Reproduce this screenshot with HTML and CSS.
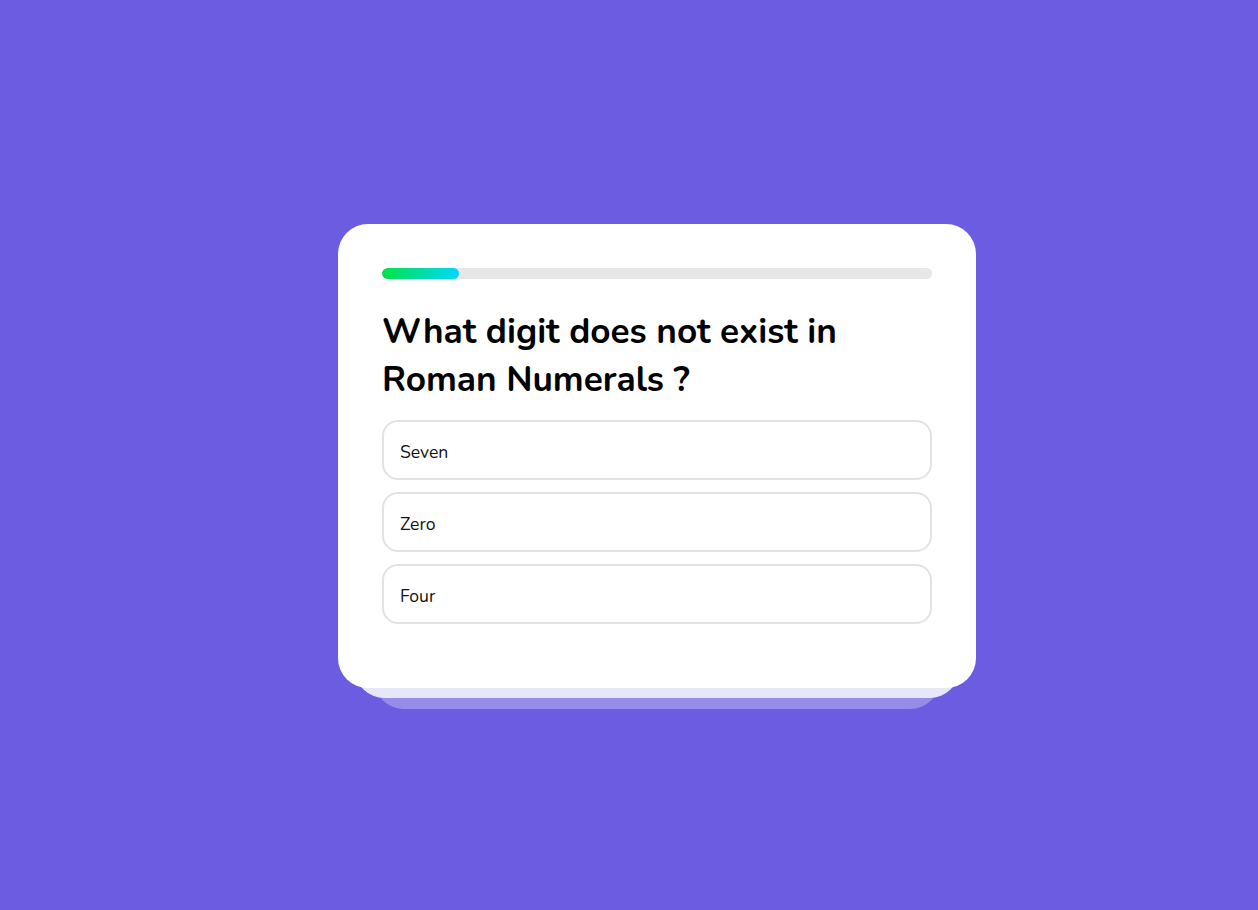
FILE: index.html
```html
<!DOCTYPE html>
<html lang="en">
<head>
<meta charset="utf-8">
<title>Quiz</title>
<link rel="stylesheet" href="styles.css">
</head>
<body>
<main class="stage">
  <section class="card">
    <div class="progress"><div class="progress-fill" style="width:14%"></div></div>
    <h1 class="question">What digit does not exist in Roman Numerals ?</h1>
    <div class="options">
      <button class="option">Seven</button>
      <button class="option">Zero</button>
      <button class="option">Four</button>
    </div>
  </section>
</main>
</body>
</html>
```

FILE: styles.css
```css
* { box-sizing: border-box; }
html, body { margin: 0; height: 100%; }
body {
  background: #6c5ce2;
  font-family: "Nunito", "Noto Sans", sans-serif;
}
.stage {
  height: 100%;
  display: flex;
  align-items: center;
  justify-content: center;
  padding-left: 56px;
  padding-top: 2px;
}
.card {
  position: relative;
  width: 638px;
  height: 464px;
  background: #fff;
  border-radius: 30px;
  padding: 44px 44px;
}
.card::before,
.card::after {
  content: "";
  position: absolute;
  left: 50%;
  transform: translateX(-50%);
  border-radius: 30px;
}
.card::before {
  width: 605px;
  height: 100px;
  bottom: -10px;
  background: #e8e6fa;
  z-index: -1;
}
.card::after {
  width: 566px;
  height: 100px;
  bottom: -21px;
  background: #988ceb;
  z-index: -2;
}
.progress {
  height: 11px;
  background: #e7e7e7;
  border-radius: 6px;
  overflow: hidden;
}
.progress-fill {
  height: 100%;
  border-radius: 6px;
  background: linear-gradient(90deg, #00e344, #00d7ff);
}
.question {
  margin: 28px 0 17px;
  font-size: 35.2px;
  line-height: 48px;
  font-weight: 700;
  color: #000;
}
.options {
  display: flex;
  flex-direction: column;
  gap: 12px;
}
.option {
  height: 60px;
  display: flex;
  align-items: center;
  padding: 4px 16px 0;
  background: #fff;
  border: 2px solid #e3e3e3;
  border-radius: 16px;
  font-family: inherit;
  font-size: 17.6px;
  color: #111;
  text-align: left;
}
```
